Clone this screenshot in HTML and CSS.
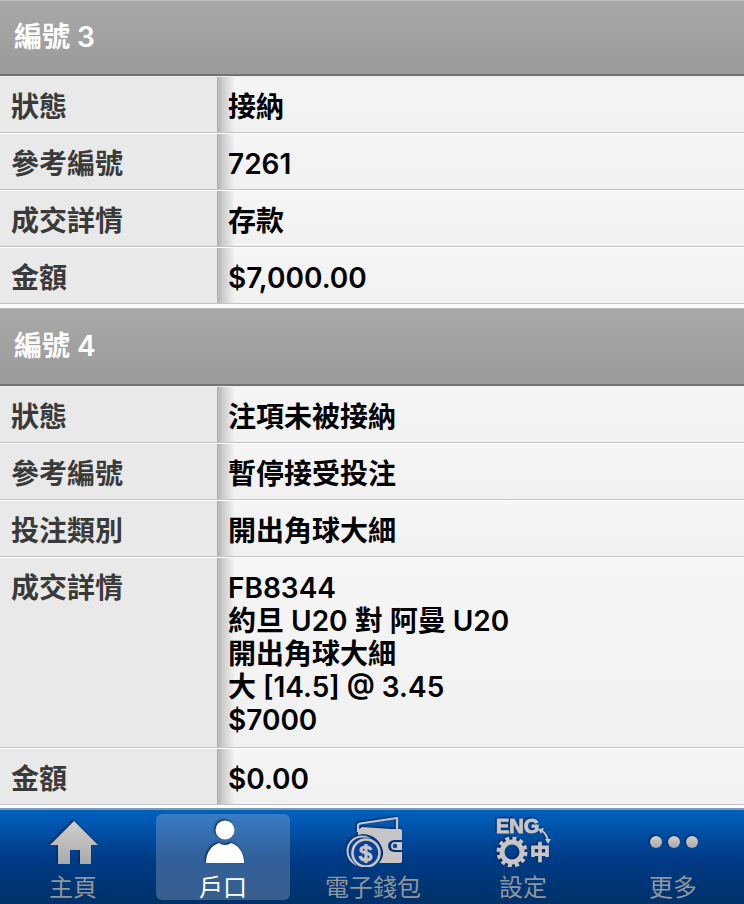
FILE: index.html
```html
<!DOCTYPE html>
<html lang="zh-Hant">
<head>
  <meta charset="UTF-8">
  <meta name="viewport" content="width=device-width, initial-scale=1">
  <title>戶口</title>
  <link rel="stylesheet" href="styles.css">
</head>
<body>

  <main>
    <section class="record">
      <h2>編號 3</h2>
      <table>
        <tr>
          <th scope="row">狀態</th>
          <td>接納</td>
        </tr>
        <tr>
          <th scope="row">參考編號</th>
          <td>7261</td>
        </tr>
        <tr>
          <th scope="row">成交詳情</th>
          <td>存款</td>
        </tr>
        <tr>
          <th scope="row">金額</th>
          <td>$7,000.00</td>
        </tr>
      </table>
    </section>

    <section class="record">
      <h2>編號 4</h2>
      <table>
        <tr>
          <th scope="row">狀態</th>
          <td>注項未被接納</td>
        </tr>
        <tr>
          <th scope="row">參考編號</th>
          <td>暫停接受投注</td>
        </tr>
        <tr>
          <th scope="row">投注類別</th>
          <td>開出角球大細</td>
        </tr>
        <tr class="details">
          <th scope="row">成交詳情</th>
          <td>FB8344<br>約旦 U20 對 阿曼 U20<br>開出角球大細<br>大 [14.5] @ 3.45<br>$7000</td>
        </tr>
        <tr>
          <th scope="row">金額</th>
          <td>$0.00</td>
        </tr>
      </table>
    </section>
  </main>

  <nav class="tabbar">
    <ul>
      <li>
        <a href="#home">
          <svg viewBox="0 0 64 52" aria-hidden="true">
            <defs>
              <linearGradient id="silver" x1="0" y1="0" x2="0" y2="1">
                <stop offset="0" stop-color="#d2d0ce"/>
                <stop offset="1" stop-color="#aaa9aa"/>
              </linearGradient>
            </defs>
            <path fill="url(#silver)" d="M33 6 L57 30 H50 V49 H39 V35 H29 V49 H17 V30 H9 Z"/>
          </svg>
          <span>主頁</span>
        </a>
      </li>
      <li>
        <a href="#account" class="active" aria-current="page">
          <svg viewBox="0 0 64 52" aria-hidden="true">
            <circle cx="34" cy="15" r="9.5" fill="#fff"/>
            <path fill="#fff" d="M15 48 C15 37 21 30 28 28 Q34 32 40 28 C47 30 53 37 53 48 Z"/>
          </svg>
          <span>戶口</span>
        </a>
      </li>
      <li>
        <a href="#wallet">
          <svg viewBox="0 0 64 52" aria-hidden="true">
            <path fill="none" stroke="#c9c5c6" stroke-width="2.2" stroke-linejoin="round" d="M17 17 V11 Q17 9 19 8.5 L56 3 V15"/>
            <path fill="#c9c5c6" d="M17 15 L21 12 L50 14 H59 Q61 14 61 16 V25 H53 Q47 26 47 31 Q47 36 53 37 H61 V46 Q61 48 59 48 H38 Q43 42 42 36 Q38 20 22 19 L17 20 Z"/>
            <path fill="#c9c5c6" d="M61 27 H54 Q50 27 50 31 Q50 35 54 35 H61 Z"/>
            <circle cx="54" cy="31" r="2.2" fill="#06439b"/>
            <circle cx="21" cy="36" r="14.5" fill="#064196" stroke="#c9c5c6" stroke-width="2"/>
            <circle cx="25" cy="38" r="15.5" fill="#064196"/>
            <circle cx="25" cy="38" r="13.5" fill="none" stroke="#c9c5c6" stroke-width="2.6"/>
            <path fill="none" stroke="#c9c5c6" stroke-width="3.2" d="M30 35 Q29 32 25 32 Q20 32 20 35 Q20 37 25 38 Q30 39 30 42 Q30 45 25 45 Q20 45 19 41 M25 29 V48"/>
          </svg>
          <span>電子錢包</span>
        </a>
      </li>
      <li>
        <a href="#settings">
          <svg viewBox="0 0 64 52" aria-hidden="true">
            <text class="lang-en" x="5" y="18">ENG</text>
            <circle cx="21" cy="37" r="10" fill="none" stroke="#c9c5c6" stroke-width="5"/>
            <circle cx="21" cy="37" r="13.5" fill="none" stroke="#c9c5c6" stroke-width="4" stroke-dasharray="3.9 3.17"/>
            <text class="lang-zh" x="39" y="45">中</text>
            <path fill="none" stroke="#c9c5c6" stroke-width="2" d="M50 15 Q56 19 57 26"/>
            <path fill="#c9c5c6" d="M47 14 L53 13 L50 19 Z M54 24 L60 24 L57 29 Z"/>
          </svg>
          <span>設定</span>
        </a>
      </li>
      <li>
        <a href="#more">
          <svg viewBox="0 0 64 52" aria-hidden="true">
            <circle cx="15" cy="27" r="6" fill="url(#silver)"/>
            <circle cx="33" cy="27" r="6" fill="url(#silver)"/>
            <circle cx="51" cy="27" r="6" fill="url(#silver)"/>
          </svg>
          <span>更多</span>
        </a>
      </li>
    </ul>
  </nav>

</body>
</html>
```
FILE: styles.css
```css
* {
  box-sizing: border-box;
}

body {
  display: flex;
  flex-direction: column;
  min-height: 100vh;
  margin: 0;
  background: #fff;
  font-family: Inter, "Noto Sans CJK TC", sans-serif;
  font-size: 28px;
  line-height: 33px;
}

main {
  flex: 1;
}

.record {
  padding-bottom: 4px;
}

.record:last-child {
  padding-bottom: 2px;
}

.record h2 {
  margin: 0;
  padding: 20px 14px;
  border-top: 1px solid #bbb;
  border-bottom: 2px solid #727272;
  background: linear-gradient(#a8a8a8, #9b9b9b);
  color: #fff;
  font-size: 28px;
  font-weight: 600;
}

.record + .record h2 {
  padding: 21px 14px;
}

table {
  width: 100%;
  border-collapse: separate;
  border-spacing: 0;
}

th, td {
  padding: 14px 11px 8px;
  border-top: 1px solid #fff;
  border-bottom: 1px solid #c3c3c3;
  text-align: left;
  vertical-align: top;
}

tr:first-child th,
tr:first-child td {
  border-top-color: #eee;
}

th {
  width: 217px;
  background: #e9e9e9;
  color: #3a3a3a;
  font-weight: 600;
}

td {
  background:
    linear-gradient(to right, #b0b0b0, #cdcdcd 6px, rgba(243, 243, 243, 0) 18px),
    linear-gradient(#f5f5f5, #f1f1f1);
  color: #000;
  font-weight: 600;
}

.details th,
.details td {
  padding-bottom: 10px;
}

.tabbar {
  overflow: hidden;
  border-top: 2px solid #8298b4;
  background: linear-gradient(#0062bf, #003c88 50%, #003169);
}

.tabbar ul {
  display: flex;
  margin: 0 -3px;
  padding: 4px 0;
  list-style: none;
}

.tabbar li {
  flex: 1;
  padding: 0 7px 0 9px;
}

.tabbar a {
  display: flex;
  flex-direction: column;
  align-items: center;
  height: 86px;
  border-radius: 6px;
  color: #8f969e;
  font-size: 24px;
  line-height: 32px;
  text-decoration: none;
}

.tabbar a.active {
  background: linear-gradient(#397cc2, #32609b 50%, #375f8d);
  color: #fff;
}

.tabbar svg {
  flex: none;
  width: 64px;
  height: 52px;
  margin: 1px 0 5px;
  filter: drop-shadow(-1px -1px 1px #002350);
}

.lang-en {
  fill: #c9c5c6;
  stroke: #c9c5c6;
  stroke-width: 1px;
  font: bold 20px "Liberation Sans", sans-serif;
}

.lang-zh {
  fill: #c9c5c6;
  stroke: #c9c5c6;
  stroke-width: 1px;
  font: bold 20px "Noto Sans CJK TC", sans-serif;
}
```
